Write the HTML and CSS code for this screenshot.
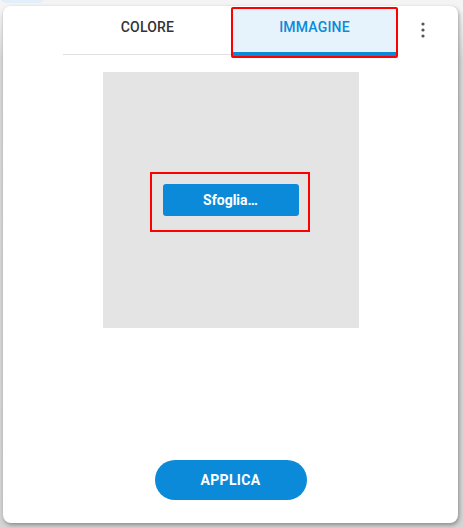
FILE: index.html
```html
<!DOCTYPE html>
<html lang="it">
<head>
    <meta charset="UTF-8">
    <meta name="viewport" content="width=device-width, initial-scale=1.0">
    <title>Sfondo</title>
    <link rel="stylesheet" href="styles.css">
</head>
<body>
    <div class="backdrop-pill"></div>
    <div class="dialog">
        <div class="header">
            <div class="tabs">
                <div class="tab">COLORE</div>
                <div class="tab active">IMMAGINE</div>
            </div>
            <div class="menu">
                <svg width="4" height="16" viewBox="0 0 4 16">
                    <circle cx="2" cy="2" r="1.6" fill="#555"/>
                    <circle cx="2" cy="8" r="1.6" fill="#555"/>
                    <circle cx="2" cy="14" r="1.6" fill="#555"/>
                </svg>
            </div>
        </div>
        <div class="preview">
            <div class="highlight">
                <button class="browse">Sfoglia…</button>
            </div>
        </div>
        <div class="footer">
            <button class="apply">APPLICA</button>
        </div>
    </div>
</body>
</html>
```

FILE: styles.css
```css
*{
    box-sizing: border-box;
}
body{
    margin:0;
    height:528px;
    padding:6px 5px 0 3px;
    background: linear-gradient(#f4f4f4 0, #f4f4f4 10px, #d9d9d9 60px, #d4d4d4 100%);
    font-family: Roboto, "Noto Sans", sans-serif;
    overflow:hidden;
    position:relative;
}
.backdrop-pill{
    position:absolute;
    left:0;
    top:-10px;
    width:45px;
    height:13px;
    border-radius: 8px;
    background-color:#e3eefb;
}
.dialog{
    position:relative;
    height:517px;
    background-color:#fff;
    border-radius: 8px;
    box-shadow: 1px 2px 4px rgba(0,0,0,0.35);
    display:flex;
    flex-direction:column;
    align-items:center;
}
.header{
    align-self:stretch;
    display:flex;
    align-items:flex-start;
    padding-left:60px;
    height:51px;
}
.tabs{
    display:flex;
    border-bottom:1px solid #e0e0e0;
    height:49px;
}
.tab{
    width:169px;
    height:48px;
    display:flex;
    align-items:center;
    justify-content:center;
    padding-bottom:7px;
    font-size:14px;
    font-weight:500;
    color:#333;
    letter-spacing:0.2px;
}
.tab.active{
    width:167px;
    height:51px;
    margin-top:1px;
    margin-left:-1px;
    border:2px solid #f00;
    border-radius: 2px;
    background-color:#e6f3fc;
    color:#0a8ad9;
    box-shadow: inset 0 -4px 0 #0a8ad9, inset 0 -6px 0 #e6f3fc;
    padding-bottom:11px;
    margin-bottom:-3px;
}
.menu{
    width:50px;
    display:flex;
    justify-content:center;
    padding-top:16px;
}
.preview{
    margin-top:15px;
    width:256px;
    height:256px;
    background-color:#e4e4e4;
    display:flex;
    align-items:center;
    justify-content:center;
}
.highlight{
    width:160px;
    height:60px;
    margin-top:4px;
    margin-right:2px;
    padding-top:10px;
    border:2px solid #f00;
    display:flex;
    align-items:flex-start;
    justify-content:center;
}
.browse{
    width:136px;
    height:32px;
    margin-left:2px;
    border:none;
    border-radius: 3px;
    background-color:#0a8ad9;
    color:#fff;
    font-family: Roboto, sans-serif;
    font-size:14px;
    font-weight:700;
}
.footer{
    margin-top:auto;
    margin-bottom:23px;
}
.apply{
    width:152px;
    height:40px;
    border:none;
    border-radius: 20px;
    background-color:#0a8ad9;
    color:#fff;
    font-family: Roboto, sans-serif;
    font-size:14px;
    font-weight:700;
    letter-spacing:0.3px;
}
```
